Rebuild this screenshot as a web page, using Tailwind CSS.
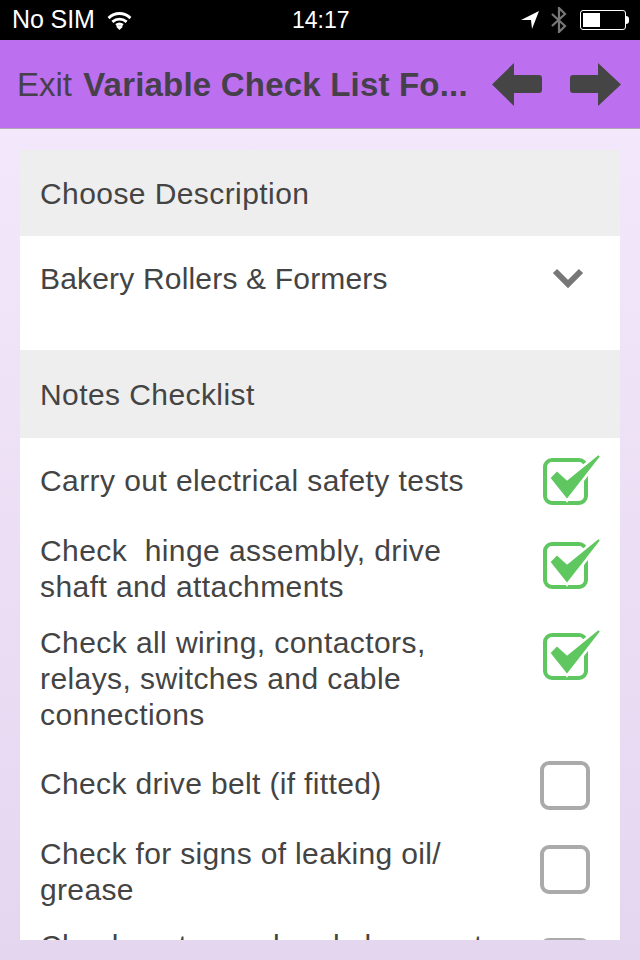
<!DOCTYPE html>
<html lang="en">
<head>
    <meta charset="UTF-8">
    <meta name="viewport" content="width=device-width, initial-scale=1.0">
    <title>Variable Check List Form</title>
    <script src="https://cdn.jsdelivr.net/npm/@tailwindcss/browser@4"></script>
</head>
<body class="w-[640px] h-[960px] overflow-hidden font-['Liberation_Sans',sans-serif] text-[#444]">
    <!-- Status bar -->
    <div class="h-10 bg-black text-white flex items-center justify-between pl-3 pr-[11px] relative">
        <div class="flex items-center gap-[12px] text-[25px] tracking-[-0.1px]">
            <span>No SIM</span>
            <svg width="25" height="19" viewBox="0 0 26 20" fill="none" stroke="#fff" stroke-width="3">
                <path d="M1.5 7.5 C8 1 18 1 24.5 7.5" />
                <path d="M5.5 11.5 C10 7.5 16 7.5 20.5 11.5" />
                <path d="M9.5 15 C11.5 13.5 14.5 13.5 16.5 15" />
                <path d="M13 20 L9.5 16.5 C11.5 15 14.5 15 16.5 16.5 Z" fill="#fff" stroke="none" />
            </svg>
        </div>
        <span class="absolute left-[292px] inset-y-0 flex items-center text-[23px]">14:17</span>
        <div class="flex items-center gap-[10px]">
            <svg width="20" height="20" viewBox="0 0 20 20"><path d="M1 10 L19 1 L12 19 L11 10 Z" fill="#fff" /></svg>
            <svg width="18" height="26" viewBox="0 0 18 26" fill="none" stroke="#777" stroke-width="2.2"><path d="M2 7 L15 19 L9 25 V1 L15 7 L2 19" /></svg>
            <div class="flex items-center ml-[2px]">
                <div class="w-[46px] h-[20px] border border-white rounded-[3px] p-[2px] flex">
                    <div class="w-[17px] bg-white"></div>
                </div>
                <div class="w-[3px] h-[8px] bg-white rounded-r-sm"></div>
            </div>
        </div>
    </div>

    <!-- Nav bar -->
    <div class="h-[89px] bg-[#bc6fee] border-b border-[#b0a8b4] flex items-center justify-between pl-[17px] pr-[19px]">
        <div class="text-[33px] whitespace-nowrap text-[#45404a] pt-[2px]">
            <span>Exit</span> <span class="font-bold tracking-[0.2px] ml-[2px]">Variable Check List Fo...</span>
        </div>
        <div class="flex items-center gap-[27px]">
            <svg width="51" height="43" viewBox="0 0 51 43"><path d="M0 21.5 L22 0 V12 H47 Q50 12 50 15 V27 Q50 30 47 30 H22 V43 Z" fill="#454545" /></svg>
            <svg width="51" height="43" viewBox="0 0 51 43"><path d="M51 21.5 L28 0 V12 H3 Q0 12 0 15 V27 Q0 30 3 30 H28 V43 Z" fill="#454545" /></svg>
        </div>
    </div>

    <!-- Page -->
    <div class="h-[831px] bg-gradient-to-b from-[#f3e8fb] to-[#e4d6ef] px-5 pt-[21px]">
        <div class="h-[790px] overflow-hidden bg-white text-[30px] tracking-[0.42px]">
            <div class="h-[86px] bg-[#eeeeee] flex items-center pl-5">Choose Description</div>
            <div class="h-[114px] flex justify-between pl-5 pr-[36px] pt-[25px] leading-[36px]">
                <span class="tracking-[0.18px]">Bakery Rollers &amp; Formers</span>
                <svg class="mt-[6px]" width="32" height="22" viewBox="0 0 32 22" fill="none" stroke="#777" stroke-width="6"><path d="M3 4 L16 17 L29 4" /></svg>
            </div>
            <div class="h-[88px] bg-[#eeeeee] flex items-center pl-5 pt-[1px]">Notes Checklist</div>

            <div class="pl-5 pr-[20px] pt-[11px] leading-[36px]">
                <div class="h-[84px] flex justify-between">
                    <div class="w-[430px] pt-[14px]">Carry out electrical safety tests</div>
                    <svg class="mt-[3px] -mr-[1px]" width="60" height="54" viewBox="0 0 60 54" fill="none">
                        <rect x="4" y="8" width="41" height="43" rx="7" stroke="#5fc75f" stroke-width="4" />
                        <path d="M58 4 L26 30 L16 21 L11 26 L26 45 Z" stroke="#fff" stroke-width="7" />
                        <path d="M58 4 L26 30 L16 21 L11 26 L26 45 Z" fill="#5fc75f" stroke="#5fc75f" stroke-width="2" />
                    </svg>
                </div>
                <div class="h-[91px] flex justify-between">
                    <div class="w-[430px]">Check &nbsp;hinge assembly, drive shaft and attachments</div>
                    <svg class="mt-[3px] -mr-[1px]" width="60" height="54" viewBox="0 0 60 54" fill="none">
                        <rect x="4" y="8" width="41" height="43" rx="7" stroke="#5fc75f" stroke-width="4" />
                        <path d="M58 4 L26 30 L16 21 L11 26 L26 45 Z" stroke="#fff" stroke-width="7" />
                        <path d="M58 4 L26 30 L16 21 L11 26 L26 45 Z" fill="#5fc75f" stroke="#5fc75f" stroke-width="2" />
                    </svg>
                </div>
                <div class="h-[129px] flex justify-between">
                    <div class="w-[430px] pt-[1px]">Check all wiring, contactors, relays, switches and cable connections</div>
                    <svg class="mt-[3px] -mr-[1px]" width="60" height="54" viewBox="0 0 60 54" fill="none">
                        <rect x="4" y="8" width="41" height="43" rx="7" stroke="#5fc75f" stroke-width="4" />
                        <path d="M58 4 L26 30 L16 21 L11 26 L26 45 Z" stroke="#fff" stroke-width="7" />
                        <path d="M58 4 L26 30 L16 21 L11 26 L26 45 Z" fill="#5fc75f" stroke="#5fc75f" stroke-width="2" />
                    </svg>
                </div>
                <div class="h-[83px] flex justify-between">
                    <div class="w-[430px] pt-[13px] tracking-[0.35px]">Check drive belt (if fitted)</div>
                    <div class="mt-[8px] mr-[10px] w-[50px] h-[49px] border-4 border-[#aaaaaa] rounded-[9px]"></div>
                </div>
                <div class="h-[92px] flex justify-between">
                    <div class="w-[430px] tracking-[0.35px]">Check for signs of leaking oil/ grease</div>
                    <div class="mt-[9px] mr-[10px] w-[50px] h-[49px] border-4 border-[#aaaaaa] rounded-[9px]"></div>
                </div>
                <div class="h-[92px] flex justify-between">
                    <div class="w-[430px] whitespace-nowrap">Check motor seal and clean motor</div>
                    <div class="mt-[10px] mr-[10px] w-[50px] h-[49px] border-4 border-[#aaaaaa] rounded-[9px]"></div>
                </div>
            </div>
        </div>
    </div>
</body>
</html>
